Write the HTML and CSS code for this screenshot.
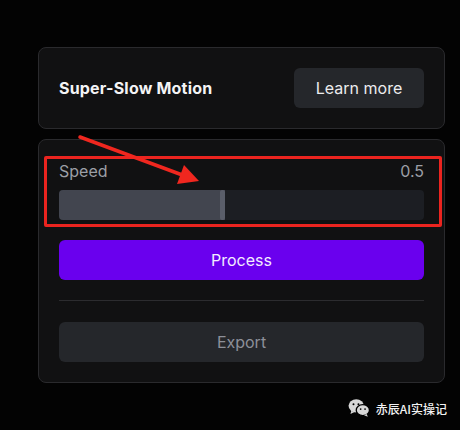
FILE: index.html
```html
<!DOCTYPE html>
<html lang="en">
<head>
    <meta charset="UTF-8">
    <meta name="viewport" content="width=device-width, initial-scale=1.0">
    <title>Super-Slow Motion</title>
    <link rel="stylesheet" href="styles.css">
</head>
<body>
    <div class="panel">
        <div class="card intro">
            <h2 class="title">Super-Slow Motion</h2>
            <button class="btn btn-dark learn">Learn more</button>
        </div>

        <div class="card tools">
            <div class="field marked">
                <div class="field-head">
                    <span>Speed</span>
                    <span>0.5</span>
                </div>
                <div class="slider">
                    <div class="slider-fill" style="width: 166px;">
                        <span class="slider-thumb"></span>
                    </div>
                </div>
            </div>

            <button class="btn btn-primary">Process</button>
            <hr class="divider">
            <button class="btn btn-dark export">Export</button>
        </div>
    </div>

    <!-- annotation arrow -->
    <svg class="arrow" width="460" height="430" viewBox="0 0 460 430">
        <line x1="80" y1="137" x2="185" y2="176" stroke="#f0271f" stroke-width="3.5" stroke-linecap="round"/>
        <polygon points="199,181 177,184 184,165" fill="#f0271f"/>
    </svg>

    <div class="watermark">
        <svg width="22" height="20" viewBox="0 0 20 18">
            <ellipse cx="7.5" cy="7" rx="7" ry="6" fill="#d8d8d8"/>
            <path d="M3 11.5 L2.2 14.5 L6 12.6 Z" fill="#d8d8d8"/>
            <ellipse cx="13.5" cy="11" rx="6" ry="5" fill="#d8d8d8" stroke="#000" stroke-width="1.2"/>
            <path d="M17 14.5 L18 17 L14.6 15.6 Z" fill="#d8d8d8"/>
            <circle cx="5" cy="5.5" r="0.9" fill="#000"/>
            <circle cx="9.5" cy="5.5" r="0.9" fill="#000"/>
            <circle cx="11.5" cy="10" r="0.8" fill="#000"/>
            <circle cx="15.5" cy="10" r="0.8" fill="#000"/>
        </svg>
        <span>赤辰AI实操记</span>
    </div>
</body>
</html>
```

FILE: styles.css
```css
body {
    margin: 0;
    width: 460px;
    height: 430px;
    background-color: #030303;
    font-family: Inter, "Noto Sans", sans-serif;
    position: relative;
    overflow: hidden;
}

.panel {
    padding: 47px 0 0 38px;
    width: 407px;
    display: flex;
    flex-direction: column;
    gap: 10px;
}

.card {
    background-color: #111112;
    border: 1px solid #2a2a2d;
    border-radius: 8px;
    padding: 20px;
}

.intro {
    display: flex;
    justify-content: space-between;
    align-items: center;
}

.title {
    margin: 0;
    font-size: 16px;
    font-weight: 700;
    letter-spacing: 0.2px;
    color: #f4f4f5;
}

.btn {
    display: block;
    height: 40px;
    border: none;
    border-radius: 6px;
    font-family: Inter, "Noto Sans", sans-serif;
    font-size: 16px;
    cursor: pointer;
}

.btn-dark {
    background-color: #25272b;
}

.learn {
    width: 130px;
    color: #ececee;
}

.tools {
    display: flex;
    flex-direction: column;
}

.field {
    position: relative;
}

.marked::before {
    content: "";
    position: absolute;
    left: -15px;
    right: -18px;
    top: -4px;
    bottom: -7px;
    border: 3px solid #eb241f;
    border-radius: 2px;
}

.field-head {
    display: flex;
    justify-content: space-between;
    font-size: 16px;
    line-height: 22px;
    color: #9c9fa6;
}

.slider {
    margin-top: 8px;
    height: 30px;
    background-color: #1c1e23;
    border-radius: 4px;
}

.slider-fill {
    height: 100%;
    background-color: #42454f;
    border-radius: 4px 0 0 4px;
    position: relative;
}

.slider-thumb {
    position: absolute;
    right: 0;
    top: 0;
    width: 5px;
    height: 100%;
    background-color: #5a5e6a;
    border-radius: 2px;
}

.btn-primary {
    margin-top: 20px;
    background-color: #6a00ee;
    color: #f3ecff;
}

.divider {
    margin: 20px 0 21px;
    border: none;
    border-top: 1px solid #2c2c2f;
}

.export {
    color: #8d9099;
}

.arrow {
    position: absolute;
    left: 0;
    top: 0;
    pointer-events: none;
}

.watermark {
    position: absolute;
    right: 13px;
    bottom: 12px;
    display: flex;
    align-items: center;
    gap: 6px;
    color: #f2f2f2;
    font-family: "Noto Sans CJK SC", sans-serif;
    font-size: 12px;
    font-weight: 500;
}
```
